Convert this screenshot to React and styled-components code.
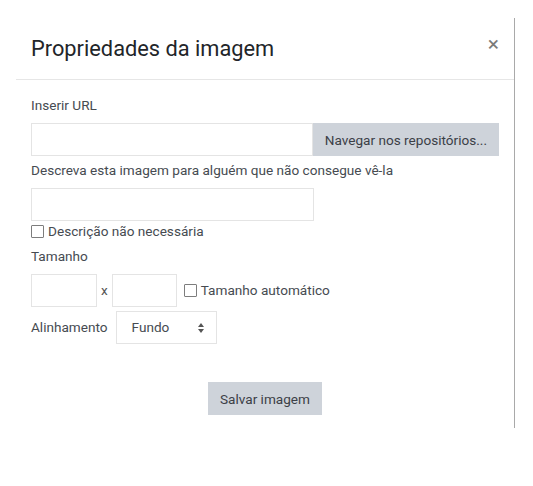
import styled, { createGlobalStyle } from 'styled-components';

const GlobalStyle = createGlobalStyle`
  html, body {
    margin: 0;
    padding: 0;
    background: #fff;
  }
  body {
    font-family: Roboto, "Liberation Sans", Arial, sans-serif;
    color: #464b51;
  }
`;

export default function App() {
  return (
    <Page>
      <GlobalStyle />
      <Modal>
        <Header>
          <Title>Propriedades da imagem</Title>
          <Close aria-label="Fechar">×</Close>
        </Header>

        <Body>
          <Group>
            <Label>Inserir URL</Label>
            <InputRow>
              <TextInput type="text" />
              <Button>Navegar nos repositórios...</Button>
            </InputRow>
          </Group>

          <Group>
            <Label>Descreva esta imagem para alguém que não consegue vê-la</Label>
            <TextInput type="text" $width="283px" />
            <CheckLine>
              <Box />
              Descrição não necessária
            </CheckLine>
          </Group>

          <Group>
            <Label>Tamanho</Label>
            <SizeRow>
              <TextInput type="text" $width="66px" />
              <Times>x</Times>
              <TextInput type="text" $width="65px" />
              <CheckLine $inline>
                <Box />
                Tamanho automático
              </CheckLine>
            </SizeRow>
          </Group>

          <AlignRow>
            <AlignLabel>Alinhamento</AlignLabel>
            <Select>
              <span>Fundo</span>
              <svg width="6" height="10" viewBox="0 0 6 10">
                <path d="M3 0 L6 4 L0 4 Z M0 6 L6 6 L3 10 Z" fill="#555" />
              </svg>
            </Select>
          </AlignRow>
        </Body>

        <Footer>
          <Button>Salvar imagem</Button>
        </Footer>
      </Modal>
    </Page>
  );
}

// styled-components

const Page = styled.div`
  padding: 18px 0 0 16px;
`;

const Modal = styled.div`
  width: 498px;
  border-right: 1px solid #a9a9a9;
  background: #fff;
`;

const Header = styled.div`
  display: flex;
  justify-content: space-between;
  align-items: flex-start;
  padding: 17px 15px;
  border-bottom: 1px solid #e6e6e6;
`;

const Title = styled.h5`
  margin: 0;
  font-size: 21.8px;
  font-weight: 400;
  line-height: 27px;
  color: #222529;
`;

const Close = styled.span`
  font-size: 21px;
  line-height: 20px;
  color: #7a7a7a;
  margin-top: -1px;
`;

const Body = styled.div`
  padding: 15px 15px 0;
  font-size: 13.6px;
  line-height: 21px;
`;

const Group = styled.div`
  margin-bottom: 4px;
`;

const Label = styled.div`
  margin-bottom: 7px;
`;

const InputRow = styled.div`
  display: flex;
`;

const TextInput = styled.input`
  box-sizing: border-box;
  display: block;
  height: 33px;
  width: ${(p) => p.$width || 'auto'};
  flex: ${(p) => (p.$width ? 'none' : '1')};
  min-width: 0;
  margin: 0;
  padding: 6px 10px;
  border: 1px solid #e4e4e4;
  border-radius: 0;
  font: inherit;
  outline: none;
`;

const Button = styled.button`
  box-sizing: border-box;
  height: 33px;
  padding: 0 12px;
  border: none;
  border-radius: 0;
  background: #ced3da;
  color: #3c4047;
  font-family: Roboto, "Liberation Sans", Arial, sans-serif;
  font-size: 13.6px;
  white-space: nowrap;
  cursor: pointer;
`;

const CheckLine = styled.label`
  display: flex;
  align-items: center;
  margin-left: ${(p) => (p.$inline ? '7px' : '0')};
`;

const Box = styled.span`
  box-sizing: border-box;
  width: 13px;
  height: 13px;
  border: 1px solid #7d7d7d;
  border-radius: 1px;
  margin-right: 4px;
  flex: none;
`;

const SizeRow = styled.div`
  display: flex;
  align-items: center;
`;

const Times = styled.span`
  margin: 0 4px;
  color: #555;
`;

const AlignRow = styled.div`
  display: flex;
  align-items: center;
`;

const AlignLabel = styled.span`
  margin-right: 8px;
`;

const Select = styled.div`
  box-sizing: border-box;
  width: 101px;
  height: 33px;
  display: flex;
  align-items: center;
  justify-content: space-between;
  padding: 0 12px 0 15px;
  border: 1px solid #e4e4e4;
`;

const Footer = styled.div`
  display: flex;
  justify-content: center;
  padding: 38px 0 13px;
`;
